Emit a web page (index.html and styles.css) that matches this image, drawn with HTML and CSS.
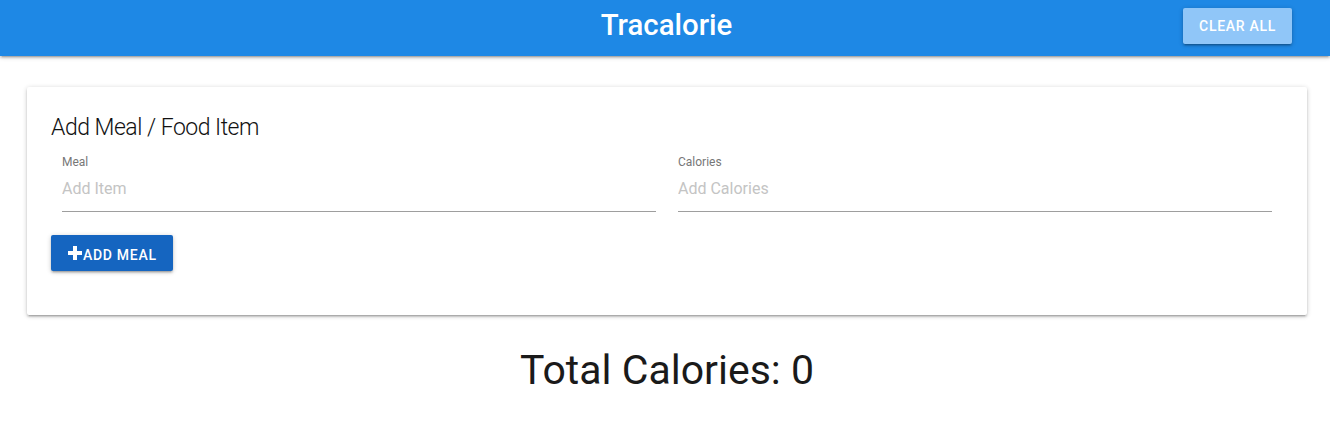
FILE: index.html
```html
<!DOCTYPE html>
<html>
<head>
<meta charset="utf-8">
<link rel="stylesheet" href="styles.css">
</head>
<body>
<nav class="navbar">
  <div class="brand">Tracalorie</div>
  <button class="btn-clear">Clear All</button>
</nav>
<main class="main">
  <section class="card">
    <h2 class="card-title">Add Meal / Food Item</h2>
    <form class="form">
      <div class="row">
        <div class="field">
          <label class="label" for="item-name">Meal</label>
          <input class="input" id="item-name" type="text" placeholder="Add Item">
        </div>
        <div class="field">
          <label class="label" for="item-calories">Calories</label>
          <input class="input" id="item-calories" type="text" placeholder="Add Calories">
        </div>
      </div>
      <button type="button" class="btn-add"><svg class="plus" width="16" height="16" viewBox="0 0 16 16"><path d="M6 1h4v5h5v4h-5v5H6v-5H1V6h5z" fill="#fff"/></svg><span class="btn-text">Add Meal</span></button>
    </form>
  </section>
  <h3 class="total">Total Calories: <span>0</span></h3>
</main>
</body>
</html>
```
FILE: styles.css
```css
* { box-sizing: border-box; }
body {
  margin: 0;
  font-family: Roboto, "Liberation Sans", sans-serif;
  color: rgba(0,0,0,0.87);
  background: #fff;
}
.navbar {
  height: 56px;
  background: #1e88e5;
  display: flex;
  align-items: flex-start;
  justify-content: center;
  position: relative;
  box-shadow: 0 2px 2px 0 rgba(0,0,0,.14), 0 3px 1px -2px rgba(0,0,0,.12), 0 1px 5px 0 rgba(0,0,0,.2);
}
.brand {
  color: #fff;
  font-size: 29.4px;
  line-height: 50px;
  font-weight: 500;
  margin-left: 3px;
}
.btn-clear {
  position: absolute;
  right: 38px;
  top: 8px;
  height: 36px;
  width: 109px;
  border: none;
  border-radius: 2px;
  background: #90c6f8;
  color: #fff;
  font-family: inherit;
  font-size: 14px;
  font-weight: 500;
  letter-spacing: 0.7px;
  text-transform: uppercase;
  box-shadow: 0 2px 2px 0 rgba(0,0,0,.14), 0 3px 1px -2px rgba(0,0,0,.12), 0 1px 5px 0 rgba(0,0,0,.2);
}
.main {
  padding: 31px 23px 0 27px;
}
.card {
  width: 1280px;
  background: #fff;
  border-radius: 2px;
  padding: 24px;
  box-shadow: 0 2px 2px 0 rgba(0,0,0,.14), 0 3px 1px -2px rgba(0,0,0,.12), 0 1px 5px 0 rgba(0,0,0,.2);
}
.card-title {
  margin: 1px 0 10px;
  font-size: 23px;
  line-height: 32px;
  font-weight: 300;
  letter-spacing: -0.5px;
  color: #111;
}
.form { margin: 0 0 20px; }
.row {
  display: flex;
}
.field {
  flex: 1;
  padding: 0 11px;
  display: flex;
  flex-direction: column;
}
.label {
  margin-top: 1px;
  font-size: 12px;
  line-height: 14px;
  color: #777;
}
.input {
  height: 43px;
  border: none;
  border-bottom: 1px solid #9e9e9e;
  padding: 0 0 3px;
  font-family: inherit;
  font-size: 16px;
  outline: none;
  background: transparent;
}
.input::placeholder { color: #c4c4c4; }
.btn-add {
  margin-top: 23px;
  height: 36px;
  width: 122px;
  display: inline-flex;
  align-items: center;
  padding: 0 16px;
  border: none;
  border-radius: 2px;
  background: #1565c0;
  color: #fff;
  font-family: inherit;
  font-size: 14px;
  font-weight: 500;
  letter-spacing: 0.7px;
  text-transform: uppercase;
  box-shadow: 0 2px 2px 0 rgba(0,0,0,.14), 0 3px 1px -2px rgba(0,0,0,.12), 0 1px 5px 0 rgba(0,0,0,.2);
}
.plus { display: block; flex: none; }
.btn-text { padding-top: 4px; }
.total {
  margin: 30px 0 0;
  text-align: center;
  font-size: 41px;
  line-height: 50px;
  font-weight: 400;
  color: #1a1a1a;
}
```
